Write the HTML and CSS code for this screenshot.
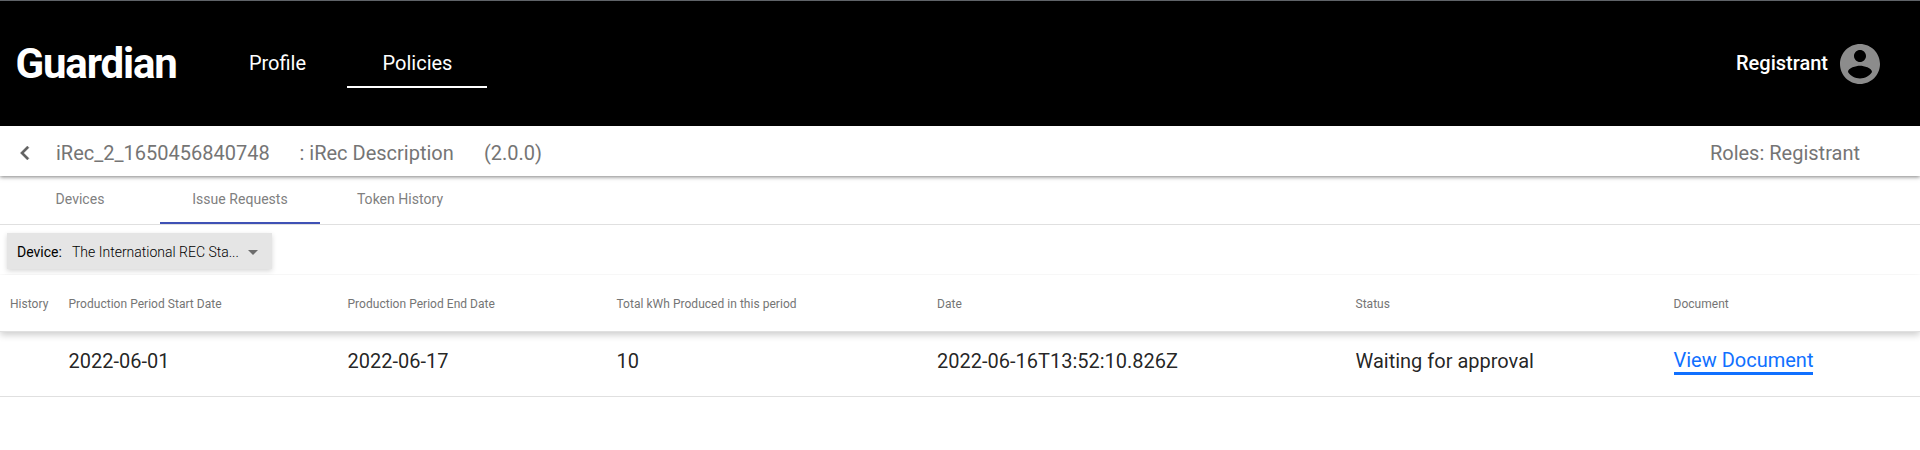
FILE: index.html
```
<!DOCTYPE html>
<html lang="en">
<head>
<meta charset="utf-8">
<title>Guardian</title>
<link rel="stylesheet" href="styles.css">
</head>
<body>
<header class="header">
  <div class="brand">Guardian</div>
  <nav class="nav">
    <a class="nav-link">Profile</a>
    <a class="nav-link nav-link-active">Policies</a>
  </nav>
  <div class="user">
    <span class="user-name">Registrant</span>
    <svg class="user-icon" viewBox="0 0 24 24"><path d="M12 2C6.48 2 2 6.48 2 12s4.48 10 10 10 10-4.48 10-10S17.52 2 12 2zm0 3c1.66 0 3 1.34 3 3s-1.34 3-3 3-3-1.34-3-3 1.34-3 3-3zm0 14.2c-2.5 0-4.71-1.28-6-3.22.03-1.99 4-3.08 6-3.08 1.99 0 5.97 1.09 6 3.08-1.29 1.94-3.5 3.22-6 3.22z"/></svg>
  </div>
</header>
<section class="policy-bar">
  <svg class="back" viewBox="0 0 24 24"><path d="M15.41 7.41L14 6l-6 6 6 6 1.41-1.41L10.83 12z"/></svg>
  <span class="policy-name">iRec_2_1650456840748</span>
  <span class="policy-desc">: iRec Description</span>
  <span class="policy-version">(2.0.0)</span>
  <span class="roles">Roles: Registrant</span>
</section>
<nav class="tabs">
  <div class="tab">Devices</div>
  <div class="tab tab-active">Issue Requests</div>
  <div class="tab">Token History</div>
</nav>
<div class="filters">
  <div class="filter">
    <span class="filter-label">Device:</span>
    <span class="filter-value">The International REC Sta...</span>
    <span class="arrow"></span>
  </div>
</div>
<main class="table">
  <div class="row row-head">
    <div>History</div>
    <div>Production Period Start Date</div>
    <div>Production Period End Date</div>
    <div>Total kWh Produced in this period</div>
    <div>Date</div>
    <div>Status</div>
    <div>Document</div>
  </div>
  <div class="row row-body">
    <div></div>
    <div>2022-06-01</div>
    <div>2022-06-17</div>
    <div>10</div>
    <div>2022-06-16T13:52:10.826Z</div>
    <div>Waiting for approval</div>
    <div><a class="doc-link">View Document</a></div>
  </div>
</main>
</body>
</html>
```
FILE: styles.css
```
* { box-sizing: border-box; }
body {
  margin: 0;
  height: 450px;
  overflow: hidden;
  background: #fff;
  font-family: Roboto, sans-serif;
  color: rgba(0, 0, 0, 0.87);
  white-space: nowrap;
}
.header {
  display: flex;
  align-items: center;
  height: 126px;
  padding: 0 36px 0 15.5px;
  border-top: 1px solid #5f6368;
  background: #000;
  color: #fff;
}
.brand {
  width: 191.5px;
  font-size: 42px;
  font-weight: 700;
  letter-spacing: -1.15px;
}
.nav { display: flex; }
.nav-link {
  width: 140px;
  height: 48px;
  padding-left: 1px;
  border-bottom: 2px solid transparent;
  font-size: 20px;
  line-height: 46px;
  text-align: center;
}
.nav-link-active { border-bottom-color: #fff; }
.user { display: flex; align-items: center; gap: 8px; margin-left: auto; }
.user-name { padding-bottom: 2px; font-size: 20px; font-weight: 500; }
.user-icon { width: 48px; height: 48px; fill: #8c8c8c; }
.policy-bar {
  position: relative;
  display: flex;
  align-items: center;
  height: 50px;
  padding: 4px 60px 0 11px;
  background: #fff;
  box-shadow: 0 1px 4px rgba(0, 0, 0, 0.5);
  color: #757575;
  font-size: 20px;
}
.back {
  width: 28px;
  height: 28px;
  margin-right: 17px;
  fill: #616161;
  stroke: #616161;
  stroke-width: 0.3;
}
.policy-name { width: 243.5px; }
.policy-desc { width: 184.5px; }
.roles { margin-left: auto; }
.tabs {
  display: flex;
  height: 49px;
  border-bottom: 1px solid #e0e0e0;
}
.tab {
  width: 160px;
  height: 48px;
  border-bottom: 2px solid transparent;
  color: #808080;
  font-size: 14px;
  line-height: 46px;
  letter-spacing: 0.03px;
  text-align: center;
}
.tab-active { border-bottom-color: #3f51b5; }
.filters { height: 50px; padding: 8px 7px 0; }
.filter {
  display: flex;
  align-items: center;
  width: 265px;
  height: 36px;
  padding: 2px 14px 0 10px;
  background: #e5e5e5;
  box-shadow: 0 2px 5px rgba(0, 0, 0, 0.16);
  font-size: 14px;
}
.filter-label { width: 55px; color: #000; }
.filter-value { font-weight: 300; color: #000; }
.arrow {
  margin-left: auto;
  border: 5px solid transparent;
  border-top-color: #6c6c6c;
  border-bottom: 0;
}
.row {
  display: grid;
  grid-template-columns: 58.5px 279px 269px 320.5px 418.5px 318px 1fr;
  align-items: center;
  padding-left: 10px;
}
.row-head {
  position: relative;
  height: 57px;
  padding-top: 2px;
  border-bottom: 1px solid #e0e0e0;
  background: #fff;
  box-shadow: 0 3px 7px rgba(0, 0, 0, 0.2);
  clip-path: inset(-1px 0 -12px 0);
  color: #757575;
  font-size: 12px;
  letter-spacing: 0.03px;
}
.row-body {
  height: 65px;
  padding-bottom: 6px;
  border-bottom: 1px solid #e0e0e0;
  font-size: 20px;
}
.doc-link {
  display: inline-block;
  border-bottom: 3px solid #1070ff;
  color: #1070ff;
}
```
